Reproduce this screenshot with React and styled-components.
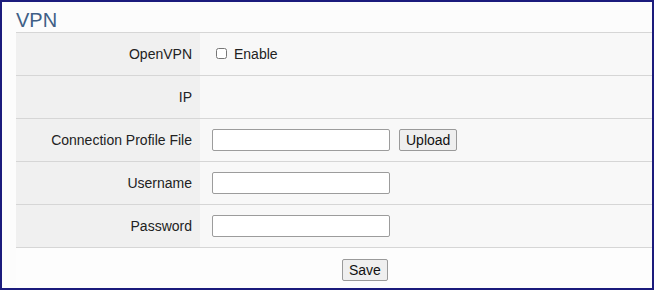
import React from "react";
import styled, { createGlobalStyle } from "styled-components";

const Global = createGlobalStyle`
  html, body { margin: 0; padding: 0; background: #ffffff; }
  body { font-family: "Liberation Sans", Arial, sans-serif; }
`;

const Frame = styled.div`
  box-sizing: border-box;
  width: 654px;
  height: 290px;
  border: 2px solid #1b1b7c;
  background: #fcfcfc;
  padding-left: 14px;
  overflow: hidden;
`;

const Title = styled.h2`
  margin: 0;
  padding-top: 7px;
  height: 23px;
  line-height: 23px;
  font-size: 20px;
  font-weight: normal;
  color: #3f5f86;
`;

const Table = styled.div`
  display: flex;
  flex-direction: column;
`;

const Row = styled.div`
  display: flex;
  height: 42px;
  border-top: 1px solid #d6d6d6;
  background: ${(p) => (p.$footer ? "#fdfdfd" : "#f8f8f8")};
`;

const Label = styled.div`
  width: 184px;
  box-sizing: border-box;
  padding-right: 8px;
  background: #f0f0f0;
  display: flex;
  align-items: center;
  justify-content: flex-end;
  font-size: 14px;
  color: #222;
`;

const Value = styled.div`
  flex: 1;
  display: flex;
  align-items: center;
  padding-left: 12px;
  font-size: 14px;
  color: #222;
`;

const Footer = styled.div`
  flex: 1;
  display: flex;
  align-items: center;
  padding-left: 326px;
  padding-top: 1px;
`;

const Check = styled.label`
  display: flex;
  align-items: center;
  font-size: 14px;
  color: #222;
  input {
    width: 11px;
    height: 11px;
    margin: 0 7px 2px 4px;
  }
`;

const TextInput = styled.input`
  box-sizing: border-box;
  width: 178px;
  height: 22px;
  border: 1px solid #9c9c9c;
  border-radius: 2px;
  background: #fff;
  padding: 1px 3px;
  margin: 0;
  font-family: inherit;
  font-size: 13px;
`;

const Button = styled.button`
  box-sizing: border-box;
  height: 22px;
  padding: 0 6px;
  margin: 0 0 0 ${(p) => p.$gap || 0}px;
  border: 1px solid #9a9a9a;
  border-radius: 2px;
  background: #efefef;
  font-family: "Liberation Sans", Arial, sans-serif;
  font-size: 14px;
  color: #111;
`;

export default function App() {
  return (
    <>
      <Global />
      <Frame>
        <Title>VPN</Title>
        <Table>
          <Row>
            <Label>OpenVPN</Label>
            <Value>
              <Check>
                <input type="checkbox" />
                Enable
              </Check>
            </Value>
          </Row>
          <Row>
            <Label>IP</Label>
            <Value />
          </Row>
          <Row>
            <Label>Connection Profile File</Label>
            <Value>
              <TextInput type="text" />
              <Button $gap={9}>Upload</Button>
            </Value>
          </Row>
          <Row>
            <Label>Username</Label>
            <Value>
              <TextInput type="text" />
            </Value>
          </Row>
          <Row>
            <Label>Password</Label>
            <Value>
              <TextInput type="password" />
            </Value>
          </Row>
          <Row $footer>
            <Footer>
              <Button>Save</Button>
            </Footer>
          </Row>
        </Table>
      </Frame>
    </>
  );
}
